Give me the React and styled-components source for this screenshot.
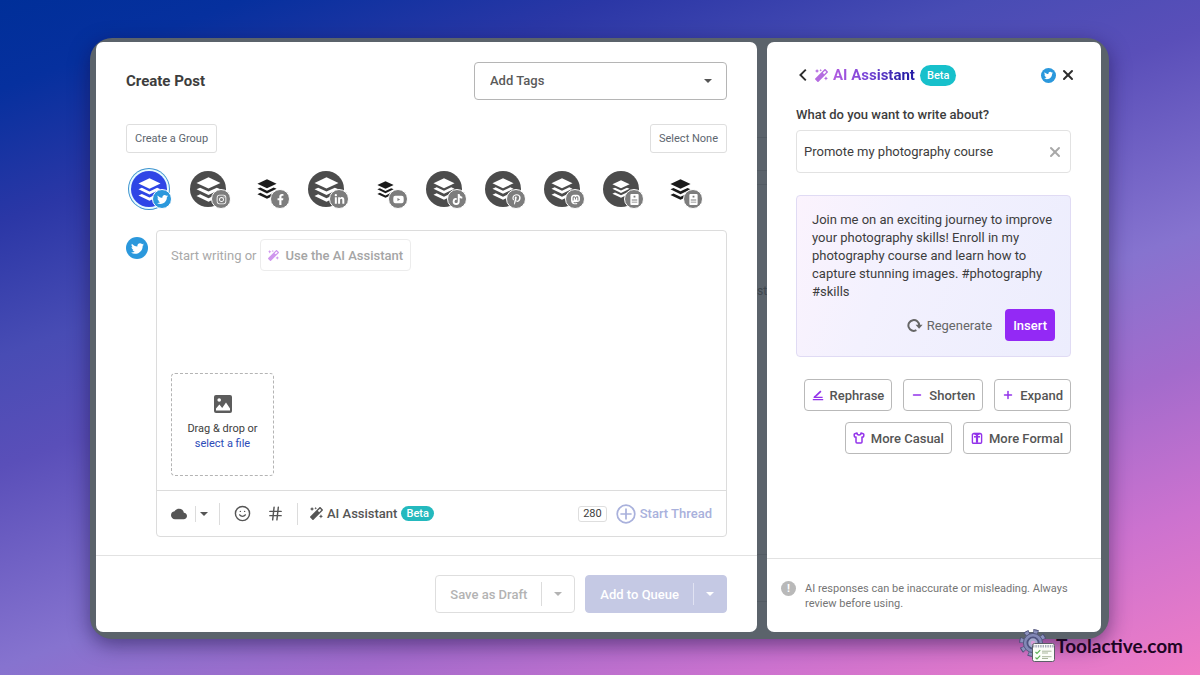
import React from "react";
import styled, { createGlobalStyle, css } from "styled-components";
import {
  FaTwitter, FaInstagram, FaFacebookF, FaLinkedinIn, FaYoutube, FaTiktok,
  FaPinterestP, FaMastodon, FaMagic,
} from "react-icons/fa";
import { MdCloud } from "react-icons/md";
import { X, Smile, Hash, Shirt, Plus, Minus } from "lucide-react";

const GlobalStyle = createGlobalStyle`
  *, *::before, *::after { box-sizing: border-box; }
  body { margin: 0; font-family: Roboto, "Liberation Sans", sans-serif; font-size: 13px; color: #3d3d3d; }
  button, input, select, textarea { font: inherit; color: inherit; }
  button { cursor: pointer; }
  svg { display: block; flex: none; }
  h1, h2, p { margin: 0; }
`;

const Stage = styled.main`
  position: relative;
  display: flex;
  min-height: 100vh;
  padding: 38px 91px 36px 90px;
  background: linear-gradient(160deg, #002f99 0%, #06309e 8%, #2b37a6 20%, #484cb4 32%, #5a4fb9 42%, #8673cf 60%, #a36bcc 72%, #cc72cf 85%, #f07dc6 100%);
`;

const Backdrop = styled.div`
  flex: 1;
  display: grid;
  grid-template-columns: minmax(0, 1fr) 10px 334px;
  padding: 4px 8px 7px 6px;
  border-radius: 22px;
  background: #5b636b;
  box-shadow: 0 6px 20px rgba(20, 10, 60, 0.5);
`;

const Gutter = styled.div`
  display: flex;
  flex-direction: column;
  overflow: hidden;
  padding-top: 95px;
  font-size: 12px;
  line-height: 14px;
  text-align: right;
  color: #3e464d;
`;

const GutterRow = styled.span`
  height: ${(p) => p.$height}px;
  padding-top: ${(p) => p.$inset || 0}px;
  border-top: 1px solid #535b63;
`;

const Panel = styled.section`
  display: flex;
  flex-direction: column;
  border-radius: 7px;
  background: #fff;
  min-width: 0;
`;

const ComposeBody = styled.div`
  flex: 1;
  display: flex;
  flex-direction: column;
  padding: 20px 30px 18px;
`;

const Spread = styled.div`
  display: flex;
  align-items: center;
  justify-content: space-between;
`;

const Title = styled.h1`
  font-size: 15px;
  line-height: 20px;
  font-weight: 700;
`;

const SelectBox = styled.div`
  position: relative;
  width: 253px;
`;

const TagSelect = styled.select`
  appearance: none;
  width: 100%;
  height: 38px;
  padding: 0 15px 2px;
  border: 1px solid #b5b5b5;
  border-radius: 4px;
  background: #fff;
  color: #5a5a5a;
  font-weight: 500;
`;

const Caret = styled.span`
  flex: none;
  width: 0;
  height: 0;
  border: 4px solid transparent;
  border-top-color: currentColor;
  border-bottom: 0;
`;

const SelectCaret = styled(Caret)`
  position: absolute;
  right: 15px;
  top: 17px;
  color: #555;
  pointer-events: none;
`;

const GroupRow = styled(Spread)`
  margin-top: 24px;
`;

const SmallButton = styled.button`
  height: 29px;
  padding: 0 8px;
  border: 1px solid #dedede;
  border-radius: 3px;
  background: #fff;
  color: #5d666f;
  font-size: 11px;
  white-space: nowrap;
`;

const Profiles = styled.div`
  display: flex;
  gap: 13px;
  margin-top: 15px;
`;

const Profile = styled.button`
  position: relative;
  display: grid;
  place-items: center;
  width: 46px;
  height: 42px;
  padding: 0;
  border: 0;
  background: none;
`;

const Avatar = styled.span`
  display: grid;
  place-items: center;
  width: 36px;
  height: 36px;
  border-radius: 50%;
  color: ${(p) => (p.$tone === "bare" ? "#1b1b1b" : "#fff")};
  background: ${(p) => ({ active: "#2e46e6", dark: "#4c4c4c", bare: "transparent" })[p.$tone]};
  ${(p) => p.$tone === "active" && css`box-shadow: 0 0 0 1px #e6fbff, 0 0 0 2px #e6fbff, 0 0 0 3px #3d93cf;`}
`;

const Badge = styled.span`
  position: absolute;
  right: 0;
  bottom: 1px;
  display: grid;
  place-items: center;
  width: 20px;
  height: 20px;
  border: 1px solid #fff;
  border-radius: 50%;
  color: #fff;
  background: ${(p) => (p.$active ? "#2b98dc" : "#7d7d7d")};
`;

const ComposerRow = styled.div`
  flex: 1;
  display: flex;
  align-items: flex-start;
  gap: 8px;
  margin-top: 20px;
`;

const NetworkDot = styled.span`
  flex: none;
  display: grid;
  place-items: center;
  width: ${(p) => p.$size}px;
  height: ${(p) => p.$size}px;
  border-radius: 50%;
  color: #fff;
  background: #2b98dc;
`;

const DotColumn = styled.div`
  padding-top: 7px;
`;

const Composer = styled.div`
  flex: 1;
  align-self: stretch;
  display: flex;
  flex-direction: column;
  min-width: 0;
  border: 1px solid #dcdcdc;
  border-radius: 4px;
`;

const Writing = styled.div`
  flex: 1;
  display: flex;
  flex-direction: column;
  padding: 8px 14px 14px;
`;

const Prompt = styled.div`
  display: flex;
  align-items: center;
  gap: 3px;
  color: #a9a9a9;
`;

const AssistantHint = styled.button`
  display: flex;
  align-items: center;
  gap: 7px;
  height: 32px;
  padding: 0 7px;
  border: 1px solid #ececec;
  border-radius: 4px;
  background: #fff;
  color: #a5a5a5;
  font-weight: 500;
  white-space: nowrap;
  svg { color: #cf96ee; }
`;

const Draft = styled.textarea`
  flex: 1;
  width: 100%;
  min-height: 40px;
  padding: 0;
  border: 0;
  outline: 0;
  resize: none;
  background: none;
`;

const DropZone = styled.div`
  display: flex;
  flex-direction: column;
  align-items: center;
  width: 103px;
  height: 103px;
  padding-top: 21px;
  border: 1px dashed #b4b4b4;
  border-radius: 4px;
  font-size: 11px;
  line-height: 15px;
  svg { margin-bottom: 8px; }
`;

const FileLink = styled.a`
  color: #2c4bb8;
  text-decoration: none;
`;

const Toolbar = styled.div`
  display: flex;
  align-items: center;
  height: 46px;
  padding: 0 14px;
  border-top: 1px solid #dcdcdc;
  color: #555;
`;

const ToolButton = styled.button`
  display: flex;
  align-items: center;
  gap: 4px;
  padding: 0;
  border: 0;
  background: none;
  font-weight: 500;
  white-space: nowrap;
  color: ${(p) => (p.$muted ? "#a9b1dc" : "#555")};
`;

const ToolGroup = styled.div`
  display: flex;
  align-items: center;
  gap: 16px;
`;

const Rule = styled.span`
  width: 1px;
  height: ${(p) => p.$height}px;
  margin: ${(p) => p.$margin || 0};
  background: ${(p) => p.$color || "#dcdcdc"};
`;

const Beta = styled.span`
  display: flex;
  align-items: center;
  height: ${(p) => (p.$large ? 21 : 15)}px;
  padding: 0 ${(p) => (p.$large ? 7 : 5)}px;
  border-radius: 11px;
  color: #fff;
  background: ${(p) => (p.$large ? "#17c0cb" : "#24b9be")};
  font-size: 11px;
  font-weight: 500;
`;

const Counter = styled.span`
  margin-left: auto;
  margin-right: 9px;
  padding: 0 4px;
  border: 1px solid #dedede;
  border-radius: 3px;
  font-size: 11px;
  line-height: 14px;
  color: #3d3d3d;
`;

const ComposeFooter = styled.footer`
  display: flex;
  justify-content: flex-end;
  gap: 10px;
  padding: 19px 30px;
  border-top: 1px solid #e2e2e2;
`;

const SplitButton = styled.div`
  display: flex;
  align-items: center;
  height: 38px;
  border: 1px solid ${(p) => (p.$filled ? "#c5c9e4" : "#dedede")};
  border-radius: 4px;
  background: ${(p) => (p.$filled ? "#c5c9e4" : "#fff")};
  color: ${(p) => (p.$filled ? "#fff" : "#b3b3b3")};
`;

const SplitMain = styled.button`
  height: 100%;
  padding: 0 14px;
  border: 0;
  background: none;
  font-weight: 500;
  white-space: nowrap;
`;

const SplitMore = styled.button`
  display: grid;
  place-items: center;
  width: 32px;
  height: 100%;
  padding: 0;
  border: 0;
  background: none;
`;

const AssistantBody = styled.div`
  flex: 1;
  display: flex;
  flex-direction: column;
  padding: 21px 30px 20px 29px;
`;

const AssistantHead = styled.header`
  display: flex;
  align-items: center;
  gap: 5px;
  height: 24px;
`;

const IconButton = styled.button`
  display: grid;
  place-items: center;
  padding: 0;
  border: 0;
  background: none;
  color: ${(p) => p.$color || "#2d2d2d"};
`;

const AssistantTitle = styled.h2`
  font-size: 15px;
  line-height: 20px;
  font-weight: 700;
  color: transparent;
  background: linear-gradient(90deg, #b25ce0 0%, #7a45d8 40%, #2a1fa8 85%);
  background-clip: text;
`;

const HeadActions = styled.div`
  display: flex;
  align-items: center;
  gap: 4px;
  margin-left: auto;
  margin-right: -5px;
`;

const Question = styled.label`
  margin-top: 18px;
  line-height: 20px;
  font-weight: 500;
`;

const TopicField = styled.div`
  display: flex;
  align-items: center;
  height: 43px;
  margin-top: 5px;
  padding: 0 7px;
  border: 1px solid #e2e2e2;
  border-radius: 4px;
`;

const TopicInput = styled.input`
  flex: 1;
  min-width: 0;
  padding: 0;
  border: 0;
  outline: 0;
  background: none;
`;

const Suggestion = styled.article`
  margin-top: 22px;
  padding: 15px;
  border: 1px solid #e0dbf4;
  border-radius: 4px;
  background: linear-gradient(110deg, #fbf3fd 0%, #f3f1fe 35%, #ecedfd 100%);
`;

const SuggestionText = styled.p`
  line-height: 18px;
`;

const SuggestionActions = styled.div`
  display: flex;
  align-items: center;
  justify-content: flex-end;
  gap: 13px;
  margin-top: 8px;
`;

const Regenerate = styled(ToolButton)`
  font-weight: 400;
  color: #666;
`;

const Insert = styled.button`
  height: 32px;
  padding: 0 8px;
  border: 0;
  border-radius: 4px;
  background: #9329f5;
  color: #fff;
  font-weight: 500;
`;

const Chips = styled.div`
  display: flex;
  flex-wrap: wrap;
  justify-content: flex-end;
  gap: 11px;
  margin-top: 22px;
`;

const Chip = styled.button`
  display: flex;
  align-items: center;
  gap: 6px;
  height: 32px;
  padding: 0 7px;
  border: 1px solid #b9b9b9;
  border-radius: 4px;
  background: #fff;
  color: #555;
  font-weight: 500;
  white-space: nowrap;
  svg { color: #9333ea; }
`;

const Notice = styled.footer`
  display: flex;
  align-items: flex-start;
  gap: 9px;
  padding: 22px 14px 21px;
  border-top: 1px solid #e2e2e2;
  font-size: 11px;
  line-height: 15px;
  color: #757575;
`;

const NoticeMark = styled.span`
  flex: none;
  display: grid;
  place-items: center;
  width: 15px;
  height: 15px;
  border-radius: 50%;
  background: #b9b9b9;
  color: #fff;
  font-weight: 700;
`;

const Brand = styled.a`
  position: absolute;
  right: 17px;
  bottom: 12px;
  display: flex;
  align-items: center;
  color: #1d0524;
  font: 700 19px/24px "Comic Sans MS", Lato, sans-serif;
  text-decoration: none;
`;

const BufferMark = ({ size }) => (
  <svg width={size} height={size} viewBox="0 0 24 24" fill="currentColor" aria-hidden="true">
    <path d="M12 .3 23.5 5.7 12 11.1 .5 5.7Z" />
    <path d="M.5 11.8 4 10.2 12 14 20 10.2 23.5 11.8 12 17.3Z" />
    <path d="M.5 18.2 4 16.6 12 20.4 20 16.6 23.5 18.2 12 23.7Z" />
  </svg>
);

const PageGlyph = ({ size }) => (
  <svg width={size} height={size} viewBox="0 0 12 12" aria-hidden="true">
    <rect x="1.5" y="0" width="9" height="12" rx="1" fill="currentColor" />
    <path d="M5 1.8h2v2H5zM3 6h6v1H3zM3 8.4h6v1H3z" fill="#7d7d7d" />
  </svg>
);

const ChevronGlyph = () => (
  <svg width="14" height="14" viewBox="0 0 14 14" fill="none" stroke="currentColor" strokeWidth="1.9" aria-hidden="true">
    <path d="M9.8 1.6 4.4 7l5.4 5.4" />
  </svg>
);

const ImageGlyph = () => (
  <svg width="18" height="18" viewBox="0 0 18 18" aria-hidden="true">
    <rect width="18" height="18" rx="2" fill="#5c5c5c" />
    <circle cx="5.2" cy="5" r="1.8" fill="#fff" />
    <path d="M2 15.5V13.6L5.4 9.6 8.2 13 12 7.4 16 13.4v2.1Z" fill="#fff" />
  </svg>
);

const RegenerateGlyph = () => (
  <svg width="16" height="14" viewBox="0 0 16 14" fill="none" aria-hidden="true">
    <path d="M9.4 12.2A5.4 5.4 0 1 1 12.2 7.4" stroke="currentColor" strokeWidth="2" />
    <path d="M8.6 6.8h7L12.1 10.8Z" fill="currentColor" />
  </svg>
);

const RephraseGlyph = () => (
  <svg width="12" height="12" viewBox="0 0 12 12" fill="none" stroke="currentColor" aria-hidden="true">
    <path d="M8.9 2.2 4.2 6.6 2.4 8.2" strokeWidth="1.7" />
    <path d="M1.6 8.3h9M.8 10.7h10.4" strokeWidth="1.3" />
  </svg>
);

const FormalGlyph = () => (
  <svg width="12" height="12" viewBox="0 0 12 12" fill="none" stroke="currentColor" aria-hidden="true">
    <rect x="1.4" y="1.8" width="9.2" height="9.5" rx="1" strokeWidth="1.4" />
    <path d="M2.8 1.2h6.4L6 3.8Z" fill="currentColor" strokeWidth="1" />
    <path d="M3 4.8h6" strokeWidth="1.5" />
    <path d="M6 3.4v7.4" strokeWidth="2.2" />
  </svg>
);

const PlusCircleGlyph = () => (
  <svg width="20" height="20" viewBox="0 0 20 20" fill="none" stroke="currentColor" strokeWidth="1.7" aria-hidden="true">
    <circle cx="10" cy="10" r="8.8" />
    <path d="M10 4.4v11.2M4.4 10h11.2" />
  </svg>
);

const BrandMark = () => (
  <svg width="37" height="34" viewBox="0 0 37 34" aria-hidden="true">
    <circle cx="14" cy="14" r="11.4" fill="none" stroke="#4c4f78" strokeWidth="5" strokeDasharray="4.8 4.15" />
    <circle cx="14" cy="14" r="11.2" fill="none" stroke="#8b91bd" strokeWidth="3.4" strokeDasharray="3.6 5.2" strokeDashoffset="-.5" />
    <circle cx="14" cy="14" r="9.6" fill="#8288b6" stroke="#555982" />
    <circle cx="14" cy="14" r="5.6" fill="#a4a9cc" stroke="#4f5380" strokeWidth="1.8" />
    <circle cx="14" cy="14" r="2.2" fill="#d79bd6" />
    <rect x="13.5" y="14.5" width="22" height="18" rx="2" fill="#fbfdf8" stroke="#5c5e68" />
    <path d="M14 17.2h21" stroke="#a6a9b8" strokeWidth="2.4" strokeDasharray="1.4 1" />
    <path d="m16.5 23 1.5 1.5 3.2-3.4M16.5 28.5 18 30l3.2-3.4" fill="none" stroke="#5fae57" strokeWidth="1.2" />
    <path d="M23 22.2h9.5M23 24h6M23 27.7h9.5M23 29.5h6" stroke="#a9b69c" />
  </svg>
);

const profiles = [
  { name: "Twitter", icon: FaTwitter, tone: "active", size: 23 },
  { name: "Instagram", icon: FaInstagram, tone: "dark", size: 25 },
  { name: "Facebook", icon: FaFacebookF, tone: "bare", size: 20 },
  { name: "LinkedIn", icon: FaLinkedinIn, tone: "dark", size: 25 },
  { name: "YouTube", icon: FaYoutube, tone: "bare", size: 17 },
  { name: "TikTok", icon: FaTiktok, tone: "dark", size: 22 },
  { name: "Pinterest", icon: FaPinterestP, tone: "dark", size: 22 },
  { name: "Mastodon", icon: FaMastodon, tone: "dark", size: 22 },
  { name: "Start Page", icon: PageGlyph, tone: "dark", size: 18 },
  { name: "Second Start Page", icon: PageGlyph, tone: "bare", size: 21 },
];

const chips = [
  { label: "Rephrase", icon: <RephraseGlyph /> },
  { label: "Shorten", icon: <Minus size={12} strokeWidth={3} /> },
  { label: "Expand", icon: <Plus size={12} strokeWidth={3} /> },
  { label: "More Casual", icon: <Shirt size={12} strokeWidth={3} /> },
  { label: "More Formal", icon: <FormalGlyph /> },
];

function ComposePanel() {
  return (
    <Panel aria-label="Create Post">
      <ComposeBody>
        <Spread>
          <Title>Create Post</Title>
          <SelectBox>
            <TagSelect aria-label="Tags" defaultValue="">
              <option value="">Add Tags</option>
            </TagSelect>
            <SelectCaret />
          </SelectBox>
        </Spread>
        <GroupRow>
          <SmallButton>Create a Group</SmallButton>
          <SmallButton>Select None</SmallButton>
        </GroupRow>
        <Profiles>
          {profiles.map(({ name, icon: Icon, tone, size }) => (
            <Profile key={name} aria-label={name} aria-pressed={tone === "active"}>
              <Avatar $tone={tone}><BufferMark size={size} /></Avatar>
              <Badge $active={tone === "active"}><Icon size={11} /></Badge>
            </Profile>
          ))}
        </Profiles>
        <ComposerRow>
          <DotColumn><NetworkDot $size={22}><FaTwitter size={13} /></NetworkDot></DotColumn>
          <Composer>
            <Writing>
              <Prompt>
                <label htmlFor="draft">Start writing or</label>
                <AssistantHint><FaMagic size={11} />Use the AI Assistant</AssistantHint>
              </Prompt>
              <Draft id="draft" />
              <DropZone>
                <ImageGlyph />
                <span>Drag &amp; drop or</span>
                <FileLink href="#file">select a file</FileLink>
              </DropZone>
            </Writing>
            <Toolbar>
              <ToolButton aria-label="Cloud storage"><MdCloud size={16} /></ToolButton>
              <Rule $height={16} $margin="0 4px 0 8px" />
              <ToolButton aria-label="More storage"><Caret /></ToolButton>
              <Rule $height={22} $margin="0 14px 0 11px" />
              <ToolGroup>
                <ToolButton aria-label="Emoji"><Smile size={17} strokeWidth={2} /></ToolButton>
                <ToolButton aria-label="Hashtag"><Hash size={17} strokeWidth={2} /></ToolButton>
              </ToolGroup>
              <Rule $height={22} $margin="0 12px 0 13px" />
              <ToolButton><FaMagic size={13} />AI Assistant<Beta>Beta</Beta></ToolButton>
              <Counter>280</Counter>
              <ToolButton $muted><PlusCircleGlyph />Start Thread</ToolButton>
            </Toolbar>
          </Composer>
        </ComposerRow>
      </ComposeBody>
      <ComposeFooter>
        <SplitButton>
          <SplitMain>Save as Draft</SplitMain>
          <Rule $height={24} />
          <SplitMore aria-label="More draft options"><Caret /></SplitMore>
        </SplitButton>
        <SplitButton $filled>
          <SplitMain>Add to Queue</SplitMain>
          <Rule $height={22} $color="#e0e2f2" />
          <SplitMore aria-label="More queue options"><Caret /></SplitMore>
        </SplitButton>
      </ComposeFooter>
    </Panel>
  );
}

function AssistantPanel() {
  return (
    <Panel aria-label="AI Assistant">
      <AssistantBody>
        <AssistantHead>
          <IconButton aria-label="Back"><ChevronGlyph /></IconButton>
          <IconButton as="span" $color="#b46be0"><FaMagic size={13} /></IconButton>
          <AssistantTitle>AI Assistant</AssistantTitle>
          <Beta $large>Beta</Beta>
          <HeadActions>
            <NetworkDot $size={15}><FaTwitter size={9} /></NetworkDot>
            <IconButton aria-label="Close"><X size={16} strokeWidth={3} /></IconButton>
          </HeadActions>
        </AssistantHead>
        <Question htmlFor="topic">What do you want to write about?</Question>
        <TopicField>
          <TopicInput id="topic" defaultValue="Promote my photography course" />
          <IconButton aria-label="Clear" $color="#a8a8a8"><X size={16} strokeWidth={3} /></IconButton>
        </TopicField>
        <Suggestion>
          <SuggestionText>
            Join me on an exciting journey to improve your photography skills! Enroll in my
            photography course and learn how to capture stunning images. #photography #skills
          </SuggestionText>
          <SuggestionActions>
            <Regenerate><RegenerateGlyph />Regenerate</Regenerate>
            <Insert>Insert</Insert>
          </SuggestionActions>
        </Suggestion>
        <Chips>
          {chips.map(({ label, icon }) => <Chip key={label}>{icon}{label}</Chip>)}
        </Chips>
      </AssistantBody>
      <Notice>
        <NoticeMark>!</NoticeMark>
        <p>AI responses can be inaccurate or misleading. Always review before using.</p>
      </Notice>
    </Panel>
  );
}

export default function App() {
  return (
    <>
      <GlobalStyle />
      <Stage>
        <Backdrop>
          <ComposePanel />
          <Gutter aria-hidden="true">
            <GutterRow $height={33} />
            <GutterRow $height={14} />
            <GutterRow $height={370} $inset={99}>st</GutterRow>
            <GutterRow $height={47} />
            <GutterRow $height={20} />
          </Gutter>
          <AssistantPanel />
        </Backdrop>
        <Brand href="#toolactive"><BrandMark />Toolactive.com</Brand>
      </Stage>
    </>
  );
}
